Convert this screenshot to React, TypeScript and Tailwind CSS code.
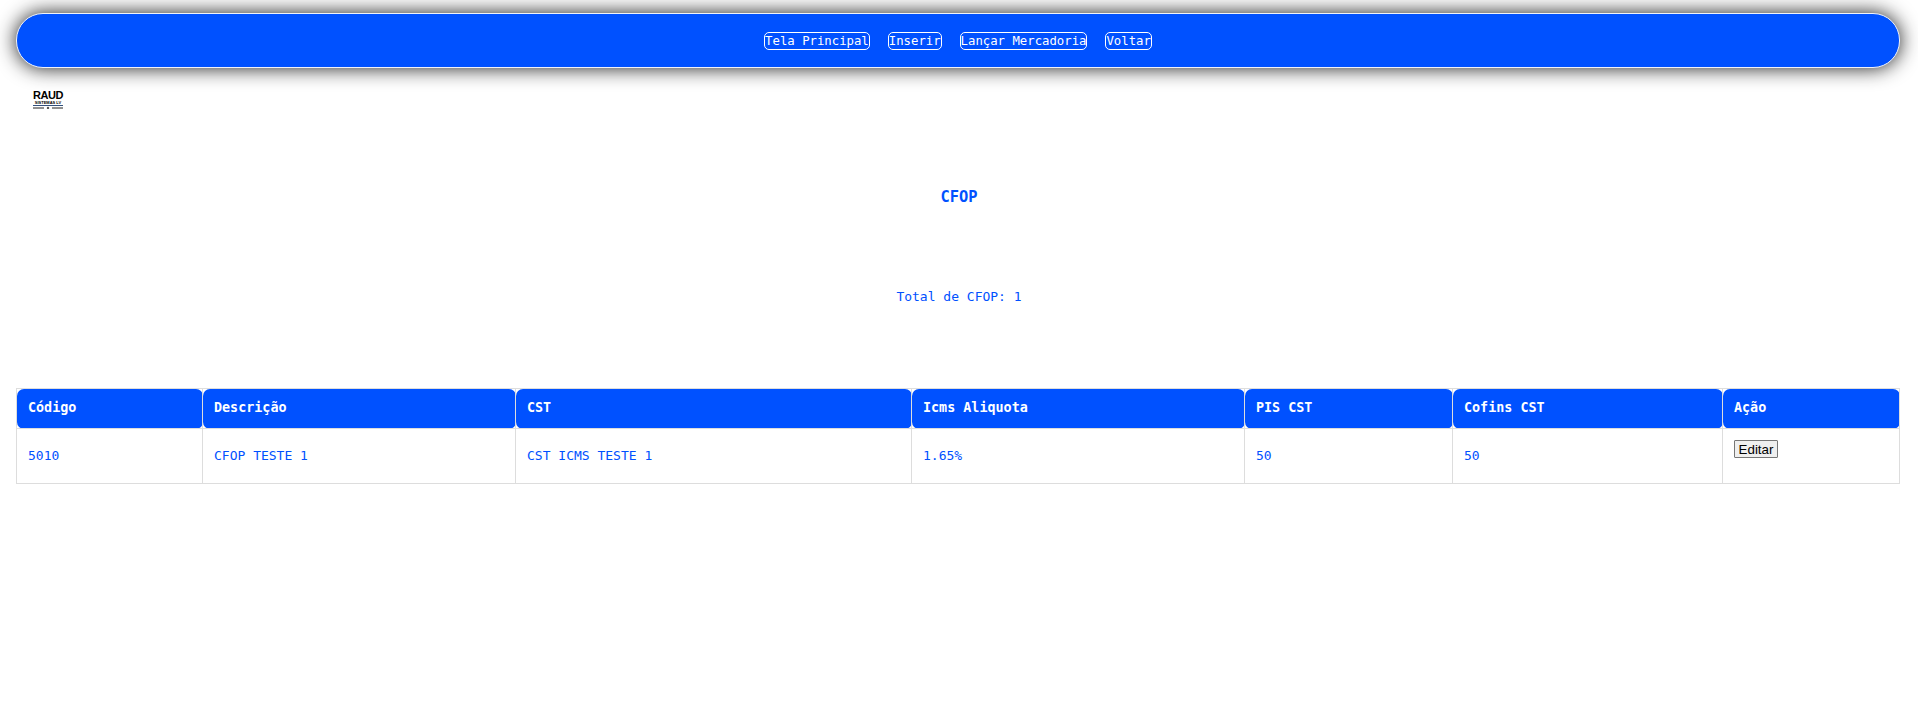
const navLinks = ["Tela Principal", "Inserir", "Lançar Mercadoria", "Voltar"];

const columns = [
  { label: "Código", value: "5010", width: "w-[186px]" },
  { label: "Descrição", value: "CFOP TESTE 1", width: "w-[313px]" },
  { label: "CST", value: "CST ICMS TESTE 1", width: "w-[396px]" },
  { label: "Icms Aliquota", value: "1.65%", width: "w-[333px]" },
  { label: "PIS CST", value: "50", width: "w-[208px]" },
  { label: "Cofins CST", value: "50", width: "w-[270px]" },
  { label: "Ação", value: null, width: "w-[177px]" },
];

const Logo = () => (
  <div className="flex w-[30px] flex-col items-center font-['Liberation_Sans',sans-serif] text-black">
    <span className="text-[11px] leading-[10px] font-bold tracking-[-0.5px]">RAUD</span>
    <span className="text-[4px] leading-[5px] font-bold whitespace-nowrap">SISTEMAS LV</span>
    <svg width="30" height="4" viewBox="0 0 30 4">
      <path d="M0 0.5H30" stroke="#33507a" strokeWidth="1" />
      <path d="M0 3H11M19 3H30" stroke="#222" strokeWidth="1" />
      <circle cx="15" cy="3" r="1.2" fill="#555" />
    </svg>
  </div>
);

export default function App() {
  return (
    <div className="min-h-[718px] bg-white font-['DejaVu_Sans_Mono',monospace] text-[#0051ff]">
      <div className="pt-[13px] pr-[18px] pl-4">
        <nav className="flex h-[55px] items-center justify-center gap-[18px] rounded-[27px] border border-[#f0f3fa] bg-[#0051ff] shadow-[0_0_20px_rgba(0,0,0,0.9)]">
          {navLinks.map((link) => (
            <a
              key={link}
              className="rounded-[5px] border border-white text-[12.3px] leading-[16px] text-white"
            >
              {link}
            </a>
          ))}
        </nav>
      </div>

      <div className="pt-[22px] pl-[33px]">
        <Logo />
      </div>

      <h1 className="mt-[78px] text-center text-[15.4px] leading-[20px] font-bold">CFOP</h1>
      <p className="mt-[82px] text-center text-[13px] leading-[16px]">Total de CFOP: 1</p>

      <div className="pt-[83px] pr-[19px] pl-4">
        <table className="w-full table-fixed border-collapse border border-[#dddddd] text-left">
          <thead>
            <tr>
              {columns.map((col) => (
                <th
                  key={col.label}
                  className={`${col.width} h-[40px] rounded-[7px] border border-[#dddddd] bg-[#0051ff] px-[11px] text-[13.4px] font-bold text-white`}
                >
                  {col.label}
                </th>
              ))}
            </tr>
          </thead>
          <tbody>
            <tr>
              {columns.map((col) => (
                <td
                  key={col.label}
                  className="h-[55px] border border-[#dddddd] px-[11px] text-[13px]"
                >
                  {col.value ?? (
                    <button className="mb-[14px] block h-[18px] w-[44px] rounded-[1px] border border-[#767676] bg-[#efefef] font-['Liberation_Sans',sans-serif] text-[13.33px] leading-[15px] text-black">
                      Editar
                    </button>
                  )}
                </td>
              ))}
            </tr>
          </tbody>
        </table>
      </div>
    </div>
  );
}
